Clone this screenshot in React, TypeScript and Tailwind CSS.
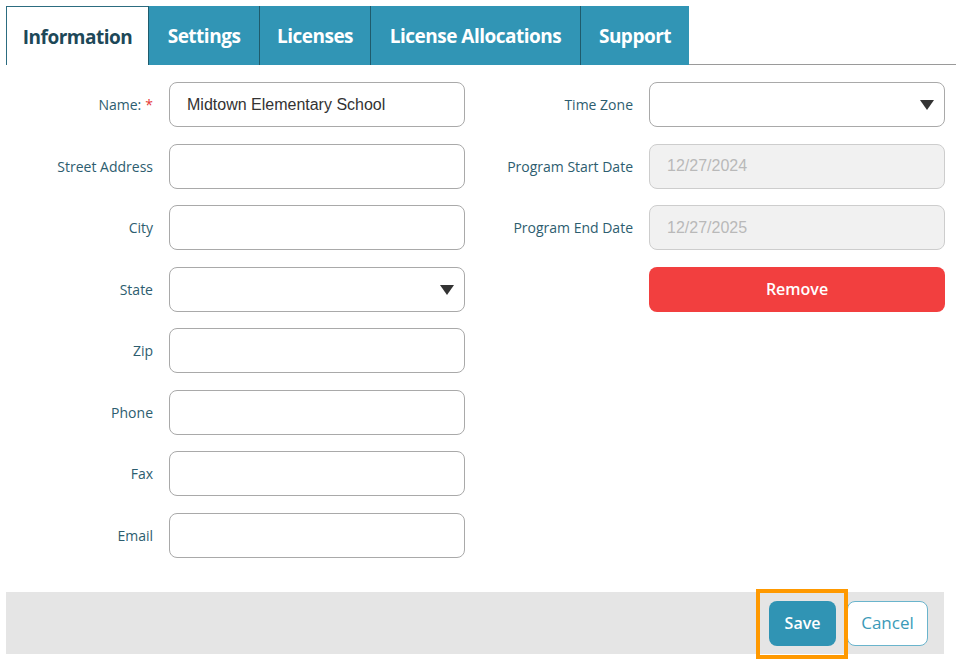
import React from 'react';

const tabs = [
    { label: 'Information', w: 'w-[142px]', active: true },
    { label: 'Settings', w: 'w-[111px]' },
    { label: 'Licenses', w: 'w-[111px]' },
    { label: 'License Allocations', w: 'w-[210px]' },
    { label: 'Support', w: 'w-[109px]' },
];

const leftFields = ['Name:', 'Street Address', 'City', 'State', 'Zip', 'Phone', 'Fax', 'Email'];

const Caret = () => (
    <svg width="14" height="10" viewBox="0 0 14 10" className="absolute right-[10px] top-[17px]">
        <path d="M0 0 H14 L7 10 Z" fill="#333" />
    </svg>
);

const Field = ({ value, select, disabled }: { value?: string; select?: boolean; disabled?: boolean }) => (
    <div
        className={`relative h-[45px] w-[296px] rounded-lg border flex items-center px-[17px] text-[16px] font-['Liberation_Sans',Arial,sans-serif] ${
            disabled ? 'bg-[#f1f1f1] border-[#cdcdcd] text-[#b9b9b9]' : 'bg-white border-[#a9a9a9] text-[#333]'
        }`}
    >
        {value}
        {select && <Caret />}
    </div>
);

const App: React.FC = () => {
    return (
        <div className="w-[960px] h-[665px] bg-white pt-[6px] pl-[6px] font-['Open_Sans',sans-serif]">
            {/* Tabs */}
            <div className="flex h-[59px] w-[950px]">
                {tabs.map((t) =>
                    t.active ? (
                        <div
                            key={t.label}
                            className={`${t.w} h-full bg-white border-l border-t border-[#2c6c80] flex items-center justify-center pt-[2px] text-[19px] font-bold text-[#1d4858] tracking-[-0.5px]`}
                        >
                            {t.label}
                        </div>
                    ) : (
                        <div
                            key={t.label}
                            className={`${t.w} h-full bg-[#3195b5] border-l border-[#1f5b6c] flex items-center justify-center pt-[2px] text-[19px] font-bold text-white tracking-[-0.5px] last:border-r`}
                        >
                            {t.label}
                        </div>
                    )
                )}
                <div className="flex-1 h-full border-b border-[#9a9a9a]" />
            </div>

            {/* Form */}
            <div className="flex mt-[17px]">
                <div className="flex flex-col gap-[16.5px]">
                    {leftFields.map((f, i) => (
                        <div key={f} className="flex items-center gap-4">
                            <div className="w-[147px] text-right text-[14px] text-[#2d5d6f]">
                                {f}
                                {i === 0 && <span className="text-[#e53935] ml-1">*</span>}
                            </div>
                            <Field value={i === 0 ? 'Midtown Elementary School' : undefined} select={f === 'State'} />
                        </div>
                    ))}
                </div>
                <div className="flex flex-col gap-[16.5px]">
                    <div className="flex items-center gap-4">
                        <div className="w-[168px] text-right text-[14px] text-[#2d5d6f]">Time Zone</div>
                        <Field select />
                    </div>
                    <div className="flex items-center gap-4">
                        <div className="w-[168px] text-right text-[14px] text-[#2d5d6f]">Program Start Date</div>
                        <Field value="12/27/2024" disabled />
                    </div>
                    <div className="flex items-center gap-4">
                        <div className="w-[168px] text-right text-[14px] text-[#2d5d6f]">Program End Date</div>
                        <Field value="12/27/2025" disabled />
                    </div>
                    <div className="flex items-center gap-4">
                        <div className="w-[168px]" />
                        <button className="h-[45px] w-[296px] rounded-lg bg-[#f23f3f] text-white text-[16px] font-semibold">
                            Remove
                        </button>
                    </div>
                </div>
            </div>

            {/* Footer */}
            <div className="mt-[34px] w-[938px] h-[62px] bg-[#e5e5e5] flex items-start justify-end pt-[9px] pr-[16px] gap-[11px]">
                <div className="relative">
                    <button className="h-[45px] w-[67px] rounded-lg bg-[#3094b4] text-white text-[16px] font-semibold">
                        Save
                    </button>
                    <div className="absolute -left-[13px] -right-[12px] -top-[12px] -bottom-[13px] border-4 border-[#ff9900]" />
                </div>
                <button className="h-[45px] w-[81px] rounded-lg bg-white border border-[#6ab4cc] text-[#3a9ab8] text-[17px]">
                    Cancel
                </button>
            </div>
        </div>
    );
};

export default App;
